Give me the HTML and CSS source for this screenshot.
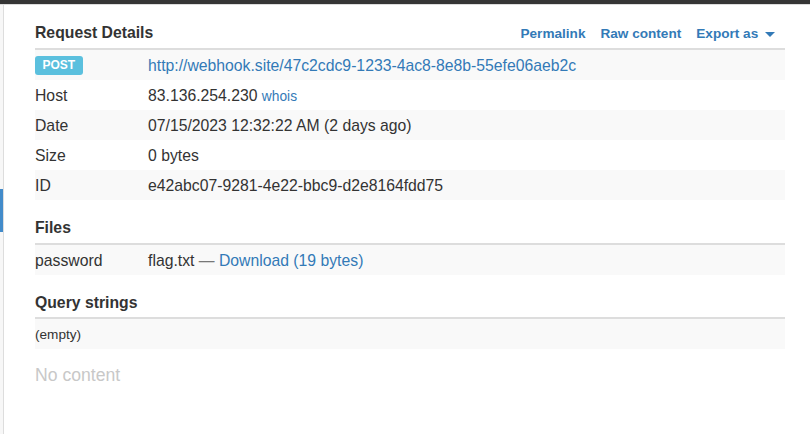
FILE: index.html
```html
<!DOCTYPE html>
<html lang="en">
<head>
<meta charset="utf-8">
<title>Request Details</title>
<link rel="stylesheet" href="styles.css">
</head>
<body>
<div class="topbar"></div>
<div class="layout">
  <aside class="sidebar"><div class="sel"></div></aside>
  <main class="main">
    <section class="section">
      <div class="sec-head">
        <h3 class="sec-title">Request Details</h3>
        <nav class="actions">
          <a class="act" href="#">Permalink</a>
          <a class="act" href="#">Raw content</a>
          <a class="act" href="#">Export as <span class="caret"></span></a>
        </nav>
      </div>
      <div class="rows">
        <div class="row"><div class="k"><span class="label">POST</span></div><div class="v"><a class="link" href="#">http://webhook.site/47c2cdc9-1233-4ac8-8e8b-55efe06aeb2c</a></div></div>
        <div class="row"><div class="k">Host</div><div class="v">83.136.254.230 <a class="small-link" href="#">whois</a></div></div>
        <div class="row"><div class="k">Date</div><div class="v">07/15/2023 12:32:22 AM (2 days ago)</div></div>
        <div class="row"><div class="k">Size</div><div class="v">0 bytes</div></div>
        <div class="row"><div class="k">ID</div><div class="v">e42abc07-9281-4e22-bbc9-d2e8164fdd75</div></div>
      </div>
    </section>
    <section class="section">
      <div class="sec-head"><h3 class="sec-title">Files</h3></div>
      <div class="rows">
        <div class="row"><div class="k">password</div><div class="v">flag.txt <span class="dash">—</span> <a class="link" href="#">Download (19 bytes)</a></div></div>
      </div>
    </section>
    <section class="section">
      <div class="sec-head sec-head-tight"><h3 class="sec-title">Query strings</h3></div>
      <div class="rows">
        <div class="row"><div class="empty">(empty)</div></div>
      </div>
    </section>
    <p class="nocontent">No content</p>
  </main>
</div>
</body>
</html>
```
FILE: styles.css
```css
* { box-sizing: border-box; }
html, body { margin: 0; padding: 0; background: #fff; }
body {
  font-family: "Liberation Sans", Arial, sans-serif;
  font-size: 15.75px;
  color: #333;
  height: 434px;
  overflow: hidden;
}
a { text-decoration: none; }
.topbar {
  height: 5px;
  background: #353535;
  border-bottom: 1px solid #dcdcdc;
}
.layout { display: flex; height: 429px; }
.sidebar {
  width: 4px;
  background: #f7f7f7;
  border-right: 1px solid #dddddd;
  padding-top: 184px;
}
.sel { height: 43px; width: 3px; background: #428bca; }
.main { width: 781px; padding-left: 31px; }
.sec-head {
  display: flex;
  align-items: baseline;
  justify-content: space-between;
  height: 45px;
  padding: 18px 10px 0 0;
  border-bottom: 2px solid #dddddd;
}
.sec-head-tight { height: 44px; padding-top: 18px; }
.sec-title {
  margin: 0;
  font-size: 15.75px;
  line-height: 20px;
  font-weight: bold;
  color: #333;
}
.actions { display: flex; gap: 15px; align-items: baseline; }
.act {
  font-size: 13.6px;
  font-weight: bold;
  color: #337ab7;
  line-height: 20px;
}
.caret {
  display: inline-block;
  width: 0; height: 0;
  margin-left: 3px;
  vertical-align: middle;
  border-top: 5px solid #337ab7;
  border-left: 5px solid transparent;
  border-right: 5px solid transparent;
}
.row {
  display: flex;
  align-items: center;
  height: 30px;
  padding-top: 2px;
  line-height: 20px;
}
.row:nth-child(odd) { background: #f9f9f9; }
.k { width: 113px; flex: none; }
.v { flex: 1; white-space: nowrap; }
.link { color: #337ab7; }
.small-link { color: #337ab7; font-size: 13.75px; }
.dash { color: #777; }
.label {
  display: inline-block;
  background: #5bc0de;
  color: #fff;
  font-weight: bold;
  font-size: 12px;
  line-height: 1;
  padding: 3px 7.5px 4px;
  border-radius: 3px;
  vertical-align: middle;
  position: relative;
  top: -1px;
}
.empty { font-size: 13.6px; }
.nocontent {
  margin: 14px 0 0;
  font-size: 17.6px;
  line-height: 24px;
  color: #c8c8c8;
}
```
